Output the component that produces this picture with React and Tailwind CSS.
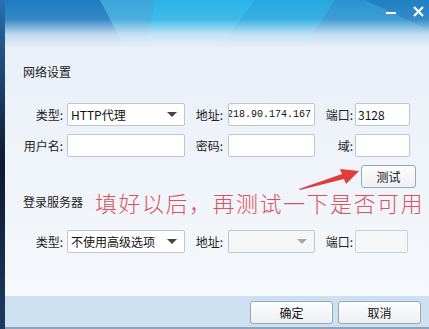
const cn = { fontFamily: '"Noto Sans CJK SC", "Noto Sans", sans-serif' };
const mono = { fontFamily: '"Liberation Mono", "Noto Sans CJK SC", monospace' };

function Label({ children, className = "" }) {
  return (
    <span className={`shrink-0 text-right text-[12px] leading-none text-[#222] ${className}`}>{children}</span>
  );
}

function Box({ className = "", disabled, children }) {
  return (
    <div
      className={`flex h-[23px] shrink-0 items-center overflow-hidden rounded-[2px] border border-[#b9c6d3] ${
        disabled ? "bg-[#f4f6f8]" : "bg-white"
      } ${className}`}
    >
      {children}
    </div>
  );
}

function Select({ value, disabled, className = "" }) {
  return (
    <Box disabled={disabled} className={`${className} justify-between pl-[3px] pr-[7px]`}>
      <span className="whitespace-nowrap text-[12px] leading-[16px] text-[#111]">{value}</span>
      <span
        className={`h-0 w-0 shrink-0 border-x-[5px] border-t-[5px] border-x-transparent ${
          disabled ? "border-t-[#a8a8a8]" : "border-t-[#444]"
        }`}
      />
    </Box>
  );
}

function Btn({ children, className = "" }) {
  return (
    <button
      type="button"
      className={`flex h-[23px] items-center justify-center rounded-[3px] border border-[#9aa6b2] bg-gradient-to-b from-[#fdfdfd] to-[#eceff3] text-[12px] leading-none text-[#111] ${className}`}
    >
      {children}
    </button>
  );
}

function Header() {
  return (
    <div className="relative h-[48px] shrink-0 overflow-hidden">
      <svg className="absolute inset-0" width="424" height="48" viewBox="0 0 424 48">
        <defs>
          <linearGradient id="fade" x1="0" y1="0" x2="0" y2="1">
            <stop offset="0" stopColor="#eaf0f8" stopOpacity="0" />
            <stop offset="0.4" stopColor="#eaf0f8" stopOpacity="0.1" />
            <stop offset="0.72" stopColor="#eaf0f8" stopOpacity="0.8" />
            <stop offset="1" stopColor="#eaf0f8" stopOpacity="1" />
          </linearGradient>
        </defs>
        <rect width="424" height="48" fill="#2a92d2" />
        <polygon points="0,0 95,0 120,48 0,48" fill="#1f7cc0" />
        <polygon points="95,0 150,0 140,48 120,48" fill="#3aa6dc" />
        <polygon points="150,0 250,0 215,48 140,48" fill="#2ab4e8" />
        <polygon points="250,0 330,0 300,48 215,48" fill="#25a8e0" />
        <polygon points="330,0 424,0 424,48 300,48" fill="#2a94d0" />
        <polygon points="360,0 424,0 424,30" fill="#1f80c2" />
        <rect width="424" height="48" fill="url(#fade)" />
      </svg>
      <div className="relative flex justify-end gap-[17px] pr-[5px] pt-[5px]">
        <div className="mt-[7px] h-[2px] w-[10px] bg-white" />
        <svg width="11" height="11" viewBox="0 0 11 11" className="mt-[1px]">
          <path d="M1 1 L10 10 M10 1 L1 10" stroke="white" strokeWidth="2.2" />
        </svg>
      </div>
    </div>
  );
}

export default function App() {
  return (
    <div className="flex h-[329px] w-[429px] overflow-hidden" style={cn}>
      <div className="w-[5px] shrink-0 bg-gradient-to-b from-[#2b6fb0] via-[#0d1a30] to-[#1d3a66]" />
      <div className="relative flex min-w-0 flex-1 flex-col bg-[#eaf0f8]">
        <Header />
        <main className="flex flex-1 flex-col bg-gradient-to-b from-[#eaf0f8] to-[#f5f8fc] pl-[18px]">
          <div className="mt-[18px] text-[12px] leading-none text-[#222]">网络设置</div>

          <div className="mt-[25px] flex items-center">
            <Label className="w-[40px]">类型:</Label>
            <Select value="HTTP代理" className="ml-[4px] w-[118px]" />
            <Label className="w-[38px]">地址:</Label>
            <Box className="ml-[5px] w-[87px] justify-end pr-[3px]">
              <span className="shrink-0 whitespace-nowrap text-[10px] leading-[14px] text-[#111]" style={mono}>
                218.90.174.167
              </span>
            </Box>
            <Label className="w-[38px]">端口:</Label>
            <Box className="ml-[2px] w-[55px] pl-[2px]">
              <span className="text-[12px] leading-none text-[#111]">3128</span>
            </Box>
          </div>

          <div className="mt-[8px] flex items-center">
            <Label className="w-[40px]">用户名:</Label>
            <Box className="ml-[4px] w-[118px]" />
            <Label className="w-[38px]">密码:</Label>
            <Box className="ml-[5px] w-[87px]" />
            <Label className="w-[38px]">域:</Label>
            <Box className="ml-[2px] w-[55px]" />
          </div>

          <div className="mt-[8px] flex justify-end pr-[13px]">
            <Btn className="w-[55px]">测试</Btn>
          </div>

          <div className="mt-[2px] flex items-center">
            <span className="shrink-0 whitespace-nowrap text-[12px] leading-none text-[#222]">登录服务器</span>
            <span className="ml-[12px] shrink-0 whitespace-nowrap text-[22px] font-light leading-[24px] tracking-[1.5px] text-[#d9535c]">
              填好以后，再测试一下是否可用
            </span>
          </div>

          <div className="mt-[16px] flex items-center">
            <Label className="w-[40px]">类型:</Label>
            <Select value="不使用高级选项" className="ml-[4px] w-[118px]" />
            <Label className="w-[38px]">地址:</Label>
            <Select value="" disabled className="ml-[5px] w-[87px]" />
            <Label className="w-[38px]">端口:</Label>
            <Box disabled className="ml-[2px] w-[53px] border-[#c9d2dc]" />
          </div>
        </main>
        <footer className="flex h-[33px] shrink-0 items-start justify-end gap-[5px] border-b-[2px] border-[#8ea4bb] bg-[#cde0f0] pr-[8px] pt-[5px]">
          <Btn className="w-[83px]">确定</Btn>
          <Btn className="w-[83px]">取消</Btn>
        </footer>
        <svg className="absolute left-[293px] top-[163px]" width="62" height="28" viewBox="0 0 62 28">
          <path d="M1 26 L44 11 L42 6 L61 8 L48 21 L46 16 L2 27 Z" fill="#e23b3b" />
        </svg>
      </div>
    </div>
  );
}
